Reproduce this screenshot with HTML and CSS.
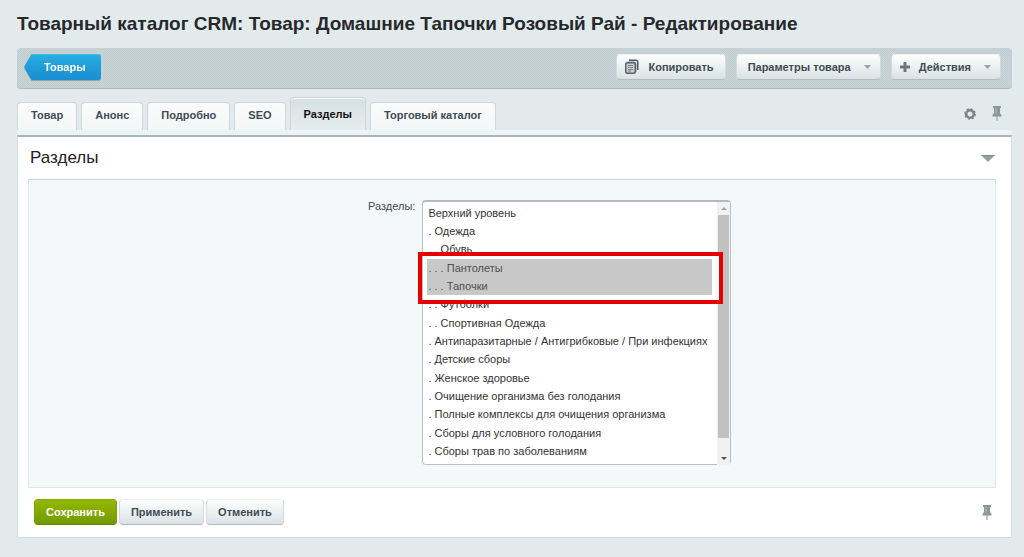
FILE: index.html
```html
<!DOCTYPE html>
<html lang="ru">
<head>
<meta charset="utf-8">
<title>Товарный каталог CRM</title>
<link rel="stylesheet" href="styles.css">
</head>
<body>
<svg class="sprite" aria-hidden="true">
  <symbol id="pin" viewBox="0 0 10 15"><path d="M1 0h8v2H8v5l1.500 2v1.500h-4V15h-1v-4.500h-4V9L2 7V2H1z" fill="#8b969a"/><path d="M3.500 2h1v6h-1z" fill="#b4bdc0"/></symbol>
</svg>
<main class="page">
  <h1 class="title">Товарный каталог CRM: Товар: Домашние Тапочки Розовый Рай - Редактирование</h1>

  <div class="toolbar">
    <a class="back" href="#">
      <svg class="back-arrow" viewBox="0 0 8 26" preserveAspectRatio="none" aria-hidden="true"><defs><linearGradient id="g" x1="0" y1="0" x2="0" y2="1"><stop offset="0" stop-color="#27aee2"/><stop offset="1" stop-color="#1b8dd0"/></linearGradient></defs><path d="M8 0H7.500L.8 11.500Q0 13 .8 14.500L7.500 26H8z" fill="url(#g)"/></svg>
      <span class="back-label">Товары</span>
    </a>
    <div class="tools">
      <button class="btn btn-icon" type="button">
        <svg width="14" height="15" viewBox="0 0 14 15" aria-hidden="true"><path d="M4 1.250h7q1.750 0 1.750 1.750v8" fill="none" stroke="#4d585c" stroke-width="1.500"/><path d="M2.500 3H9q2 0 2 2v8" fill="none" stroke="#8a9498"/><rect x=".75" y="3.750" width="9.500" height="10.500" rx="1.500" fill="#c9d0d2" stroke="#566165" stroke-width="1.500"/><path d="M3 6.500h5M3 8.500h5M3 10.500h5M3 12h3" stroke="#7b868a"/></svg>
        <span>Копировать</span>
      </button>
      <button class="btn btn-menu" type="button"><span>Параметры товара</span><svg class="caret" width="7" height="4" viewBox="0 0 7 4" aria-hidden="true"><path d="M0 0h7L3.500 4z" fill="#9aa3a6"/></svg></button>
      <button class="btn btn-icon btn-menu" type="button">
        <svg width="10" height="10" viewBox="0 0 10 10" aria-hidden="true"><path d="M3.500 0h3v3.500H10v3H6.500V10h-3V6.500H0v-3h3.500z" fill="#6c777b"/></svg>
        <span>Действия</span>
        <svg class="caret" width="7" height="4" viewBox="0 0 7 4" aria-hidden="true"><path d="M0 0h7L3.500 4z" fill="#9aa3a6"/></svg>
      </button>
    </div>
  </div>

  <div class="tabbar">
    <nav class="tabs">
      <a class="tab" href="#">Товар</a>
      <a class="tab" href="#">Анонс</a>
      <a class="tab" href="#">Подробно</a>
      <a class="tab" href="#">SEO</a>
      <a class="tab active" href="#" aria-current="page">Разделы</a>
      <a class="tab" href="#">Торговый каталог</a>
    </nav>
    <div class="tab-tools">
      <button class="plain" type="button" aria-label="Настройки"><svg width="12" height="12" viewBox="0 0 12 12"><circle cx="6" cy="6" r="3.800" fill="none" stroke="#7a8589" stroke-width="2.600"/><circle cx="6" cy="6" r="5.300" fill="none" stroke="#7a8589" stroke-width="1.200" stroke-dasharray="2.080 2.080"/></svg></button>
      <button class="plain" type="button" aria-label="Закрепить вкладки"><svg width="10" height="15"><use href="#pin"/></svg></button>
    </div>
  </div>

  <form class="panel">
    <div class="panel-head">
      <h2 class="panel-title">Разделы</h2>
      <button class="plain" type="button" aria-label="Свернуть"><svg width="14" height="7" viewBox="0 0 14 7"><path d="M0 0h14L7 7z" fill="#949da1"/><path d="M0 0h14l-1 1H1z" fill="#7d878b"/></svg></button>
    </div>
    <div class="fields">
      <label class="field-label" for="sections">Разделы:</label>
      <div class="list-wrap">
        <select class="list" id="sections" multiple size="14">
          <option>Верхний уровень</option>
          <option>. Одежда</option>
          <option>. . Обувь</option>
          <option selected>. . . Пантолеты</option>
          <option selected>. . . Тапочки</option>
          <option>. . Футболки</option>
          <option>. . Спортивная Одежда</option>
          <option>. Антипаразитарные / Антигрибковые / При инфекциях</option>
          <option>. Детские сборы</option>
          <option>. Женское здоровье</option>
          <option>. Очищение организма без голодания</option>
          <option>. Полные комплексы для очищения организма</option>
          <option>. Сборы для условного голодания</option>
          <option>. Сборы трав по заболеваниям</option>
        </select>
        <div class="scrollbar" aria-hidden="true">
          <svg width="6" height="3" viewBox="0 0 6 3"><path d="M0 3h6L3 0z" fill="#a3a3a3"/></svg>
          <div class="thumb"></div>
          <svg width="6" height="3" viewBox="0 0 6 3"><path d="M0 0h6L3 3z" fill="#505050"/></svg>
        </div>
        <div class="highlight"></div>
      </div>
    </div>
    <div class="actions">
      <button class="btn save" type="button">Сохранить</button>
      <button class="btn" type="button">Применить</button>
      <button class="btn" type="button">Отменить</button>
      <button class="plain actions-pin" type="button" aria-label="Закрепить кнопки"><svg width="10" height="15"><use href="#pin"/></svg></button>
    </div>
  </form>
</main>
</body>
</html>
```
FILE: styles.css
```css
* { box-sizing: border-box; }
body {
  margin: 0;
  background: #e2eaec;
  color: #3f4b54;
  font: 11px/18px "Liberation Sans", Arial, sans-serif;
}
.sprite { position: absolute; width: 0; height: 0; }
svg { display: block; flex: none; }
button { font: inherit; }
.page { padding: 12px 12px 20px 17px; }
.title {
  margin: 0 0 12px;
  color: #26292b;
  font-size: 19px;
  line-height: 24px;
}

.toolbar {
  display: flex;
  justify-content: space-between;
  padding: 6px 11px 8px 7px;
  border-bottom: 1px solid #adb9bc;
  border-radius: 4px;
  background: repeating-conic-gradient(#c1cdd1 0 25%, #c9d4d7 0 50%) 0 0 / 2px 2px;
}
.back {
  display: flex;
  height: 26px;
  color: #fff;
  font-weight: bold;
  line-height: 27px;
  text-decoration: none;
  filter: drop-shadow(0 1px 0 #8aa4b0);
}
.back-arrow { width: 8px; height: 26px; }
.back-label {
  padding: 0 15px 0 12px;
  border-radius: 0 3px 3px 0;
  background: linear-gradient(#27aee2, #1b8dd0);
  box-shadow: inset 0 1px 0 #45bfe9;
}
.tools { display: flex; gap: 10px; }
.btn {
  display: flex;
  align-items: center;
  height: 26px;
  padding: 0 11px 1px;
  border: 1px solid #d3dadc;
  border-top-color: #eef1f2;
  border-bottom-color: #b3bdc0;
  border-radius: 4px;
  background: linear-gradient(#fdfefe, #d9e2e4);
  color: #3f4b54;
  font-weight: bold;
  line-height: 22px;
}
.btn-icon { gap: 9px; padding-left: 8px; }
.btn-menu { padding-right: 9px; }
.caret { margin-left: 13px; }
.btn-icon .caret { margin-left: 4px; }

.tabbar {
  display: flex;
  justify-content: space-between;
  margin-top: 8px;
  border-bottom: 5px solid #edf2f4;
}
.tabs { display: flex; align-items: flex-end; gap: 4px; }
.tab {
  padding: 3px 13px 6px;
  border: 1px solid #cdd6d8;
  border-bottom: 0;
  border-radius: 4px 4px 0 0;
  background: linear-gradient(#fafbfb, #f4f7f7);
  color: #3f4b54;
  font-weight: bold;
  text-decoration: none;
}
.tab.active {
  padding: 7px 13px;
  background: linear-gradient(#d6e0e2, #e6edef);
  box-shadow: inset 0 1px 0 #f4f7f8;
  color: #111;
}
.tab-tools { display: flex; align-items: center; gap: 16px; padding-right: 10px; }
.plain { padding: 0; border: 0; background: none; }

.panel {
  border: 1px solid #d6dfe1;
  border-top: 2px solid #a9b5b8;
  border-bottom-color: #d3dcde;
  background: #fff;
}
.panel-head {
  display: flex;
  align-items: center;
  justify-content: space-between;
  height: 42px;
  padding: 0 16px 0 12px;
}
.panel-title { margin: 0; color: #222; font-size: 17px; font-weight: normal; line-height: 24px; }
.fields {
  display: grid;
  grid-template-columns: 40% 1fr;
  column-gap: 7px;
  margin: 0 15px 0 10px;
  padding: 20px 0 22px;
  border: 1px solid #dde7ea;
  border-top-color: #d0dadc;
  background: #f4f8f9;
}
.field-label { line-height: 12px; text-align: right; }
.list-wrap { position: relative; justify-self: start; }
.list {
  display: block;
  height: 265px;
  padding: 2px 18px 4px 4px;
  border: 1px solid #b9bfc1;
  border-top: 2px solid #b4babb;
  border-radius: 4px;
  outline: 0;
  background: #fff;
  color: #333;
  font: inherit;
  overflow: hidden;
}
.list option { min-height: 18px; padding: 3px 5px 0 1px; }
.list option:nth-child(3n) { min-height: 19px; }
.list option:checked { background: #c8c8c8 linear-gradient(#c8c8c8, #c8c8c8); color: #505050; }
.scrollbar {
  position: absolute;
  top: 2px;
  right: 1px;
  bottom: 0;
  width: 13px;
  display: flex;
  flex-direction: column;
  align-items: center;
  gap: 5px;
  padding: 5px 0;
  background: #f1f1f1;
}
.thumb { flex: 1; width: 11px; margin-bottom: 14px; background: #c1c1c1; }
.highlight {
  position: absolute;
  top: 52px;
  left: -4px;
  right: 8px;
  height: 52px;
  border: 4px solid #e60000;
  box-shadow: inset -3px 0 0 #fff;
  pointer-events: none;
}

.actions { display: flex; gap: 2px; padding: 11px 19px 12px 16px; }
.save {
  border-color: #86ac00 #7ca000 #668a00;
  background: linear-gradient(#93b800, #719900);
  color: #fff;
}
.actions-pin { margin-left: auto; }
```
